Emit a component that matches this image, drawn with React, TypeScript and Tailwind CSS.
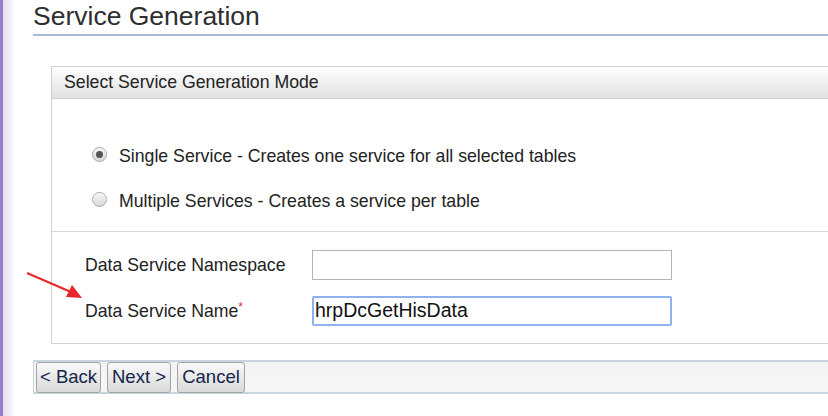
import React from 'react';

const Radio = ({ checked }: { checked?: boolean }) => (
  <span className="w-[15px] h-[15px] rounded-full border border-[#a9a9a9] bg-gradient-to-b from-[#f4f4f4] to-[#d9d9d9] flex items-center justify-center shrink-0 shadow-[inset_0_1px_1px_rgba(255,255,255,0.9)]">
    {checked && <span className="w-[7px] h-[7px] rounded-full bg-[#555]" />}
  </span>
);

const Button = ({ label, className }: { label: string; className: string }) => (
  <button className={`h-[31px] rounded-[3px] border border-[#a4a4a4] bg-gradient-to-b from-[#fafafa] to-[#d9d9d9] text-[18.5px] leading-none text-[#14254a] ${className}`}>
    {label}
  </button>
);

export default function App() {
  return (
    <div className="relative flex w-[828px] h-[416px] bg-white overflow-hidden font-['Liberation_Sans',Arial,sans-serif]">
      <div className="w-[16px] shrink-0 border-l-[3px] border-[#9a7ccf] bg-gradient-to-r from-[#e2dcee] to-white" />

      <div className="flex-1 flex flex-col pl-[17px]">
        <h1 className="mt-[2px] text-[26.5px] leading-[28px] text-[#2e2e2e]">Service Generation</h1>
        <div className="mt-[4px] h-[2px] bg-[#aab9da]" />

        <div className="ml-[18px] mt-[30px] border-l border-t border-b border-[#d2d2d2] flex flex-col">
          <div className="h-[32px] pl-[12px] flex items-center border-b border-[#d0d0d0] bg-gradient-to-b from-white to-[#e1e1e1] text-[17.7px] text-[#222]">
            Select Service Generation Mode
          </div>

          <div className="h-[133px] border-b border-[#d6d6d6] pl-[40px] pt-[48px] flex flex-col gap-[30px] text-[17.7px] text-[#222]">
            <label className="flex items-center gap-[12px] h-[15px]">
              <Radio checked />
              <span className="mt-[4px]">Single Service - Creates one service for all selected tables</span>
            </label>
            <label className="flex items-center gap-[12px] h-[15px]">
              <Radio />
              <span className="mt-[4px]">Multiple Services - Creates a service per table</span>
            </label>
          </div>

          <div className="h-[111px] pl-[33px] pt-[18px] flex flex-col gap-[16px] text-[17.7px] text-[#222]">
            <div className="flex items-center">
              <span className="w-[227px]">Data Service Namespace</span>
              <div className="w-[360px] h-[30px] border border-[#b4b4b4] bg-white" />
            </div>
            <div className="flex items-center">
              <span className="w-[227px]">
                Data Service Name<span className="text-[#e0301e] text-[12px] align-top">*</span>
              </span>
              <div className="w-[360px] h-[30px] border-2 border-[#8fb1ee] rounded-[2px] bg-white flex items-center pl-[1px] text-[19.5px] text-[#111]">
                hrpDcGetHisData
              </div>
            </div>
          </div>
        </div>

        <div className="mt-[16px] h-[34px] border-t-2 border-b-2 border-l border-[#c9d5dd] bg-gradient-to-b from-[#f4f4f4] to-[#f7f7f7] flex items-center gap-[6px] pl-[2px]">
          <Button label="< Back" className="w-[65px]" />
          <Button label="Next >" className="w-[64px]" />
          <Button label="Cancel" className="w-[68px]" />
        </div>
      </div>

      <svg className="absolute left-0 top-0 pointer-events-none" width="828" height="416">
        <line x1="27" y1="273" x2="71" y2="292" stroke="#e8262b" strokeWidth="2" />
        <polygon points="82,298 66,297 72,285" fill="#e8262b" />
      </svg>
    </div>
  );
}
